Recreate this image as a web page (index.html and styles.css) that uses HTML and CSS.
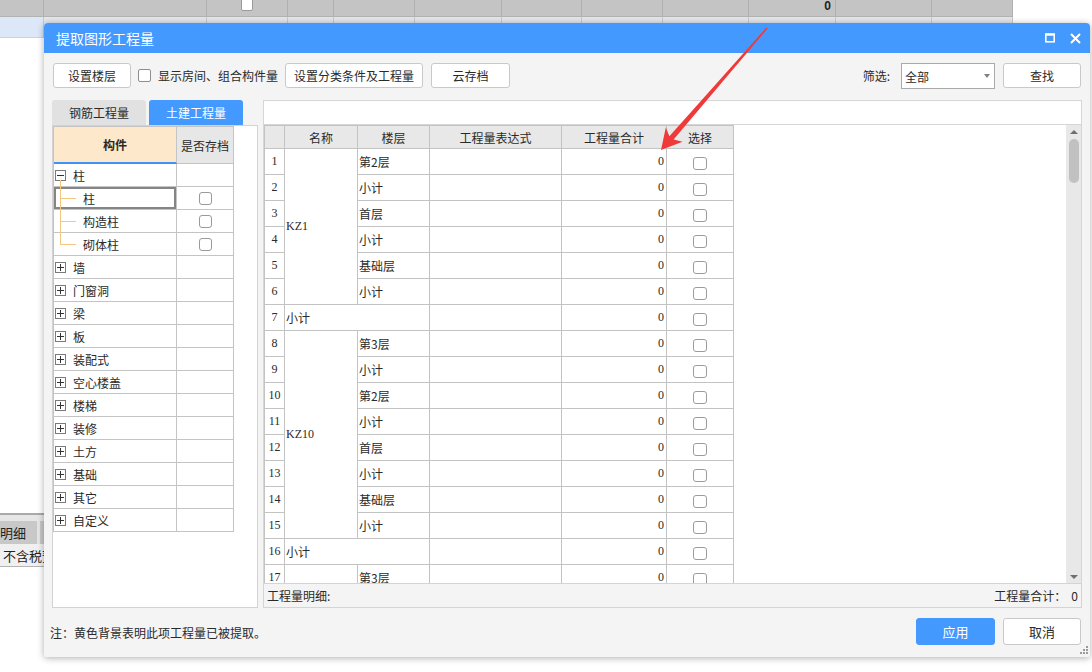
FILE: index.html
```html
<!DOCTYPE html>
<html lang="zh-CN">
<head>
<meta charset="utf-8">
<title>提取图形工程量</title>
<link rel="stylesheet" href="styles.css">
</head>
<body>
<div class="app">
  <div class="app-row row1">
    <div class="cell"></div>
    <div class="cell"></div>
    <div class="cell mid"><span class="app-check"></span></div>
    <div class="cell"></div>
    <div class="cell"></div>
    <div class="cell"></div>
    <div class="cell"></div>
    <div class="cell"></div>
    <div class="cell"></div>
    <div class="cell end"><b class="app-zero">0</b></div>
    <div class="cell"></div>
    <div class="cell"></div>
  </div>
  <div class="app-row row2">
    <div class="cell sel"></div>
    <div class="cell"></div>
    <div class="cell"></div>
    <div class="cell"></div>
    <div class="cell"></div>
    <div class="cell"></div>
    <div class="cell"></div>
    <div class="cell"></div>
    <div class="cell"></div>
    <div class="cell"></div>
    <div class="cell"></div>
    <div class="cell"></div>
  </div>
  <div class="app-spacer"></div>
  <div class="app-bottom">
    <div class="app-tabs">
      <div class="app-tab">明细</div>
      <div class="app-tab short"></div>
    </div>
    <div class="app-line">不含税预</div>
  </div>
</div>

<div class="dialog">
  <div class="titlebar">
    <span class="title">提取图形工程量</span>
    <span class="win-btns">
      <svg class="win-icon" width="10" height="10" viewBox="0 0 10 10"><rect x="0.8" y="1.2" width="8.4" height="7.6" fill="none" stroke="#fff" stroke-width="1.6"/><rect x="0" y="0.5" width="10" height="2.2" fill="#fff"/></svg>
      <svg class="win-icon" width="11" height="11" viewBox="0 0 11 11"><path d="M1 1 L10 10 M10 1 L1 10" stroke="#fff" stroke-width="2" fill="none"/></svg>
    </span>
  </div>

  <div class="toolbar">
    <button class="btn w78">设置楼层</button>
    <span class="chk-label"><span class="chk"></span>显示房间、组合构件量</span>
    <button class="btn w138">设置分类条件及工程量</button>
    <button class="btn w79">云存档</button>
    <span class="grow"></span>
    <span class="filter-label">筛选:</span>
    <div class="select">全部<span class="caret"></span></div>
    <button class="btn w78">查找</button>
  </div>

  <div class="content">
    <div class="left-col">
      <div class="tabs">
        <div class="tab">钢筋工程量</div>
        <div class="tab active">土建工程量</div>
      </div>
      <div class="left-panel">
        <div class="tree">
          <div class="tree-head"><div class="c1">构件</div><div class="c2">是否存档</div></div>
          <div class="tree-row"><div class="c1 parent"><span class="exp"></span>柱</div><div class="c2"></div></div>
          <div class="tree-row"><div class="c1 child selected">柱</div><div class="c2"><span class="chk"></span></div></div>
          <div class="tree-row"><div class="c1 child">构造柱</div><div class="c2"><span class="chk"></span></div></div>
          <div class="tree-row"><div class="c1 child last">砌体柱</div><div class="c2"><span class="chk"></span></div></div>
          <div class="tree-row"><div class="c1"><span class="exp plus"></span>墙</div><div class="c2"></div></div>
          <div class="tree-row"><div class="c1"><span class="exp plus"></span>门窗洞</div><div class="c2"></div></div>
          <div class="tree-row"><div class="c1"><span class="exp plus"></span>梁</div><div class="c2"></div></div>
          <div class="tree-row"><div class="c1"><span class="exp plus"></span>板</div><div class="c2"></div></div>
          <div class="tree-row"><div class="c1"><span class="exp plus"></span>装配式</div><div class="c2"></div></div>
          <div class="tree-row"><div class="c1"><span class="exp plus"></span>空心楼盖</div><div class="c2"></div></div>
          <div class="tree-row"><div class="c1"><span class="exp plus"></span>楼梯</div><div class="c2"></div></div>
          <div class="tree-row"><div class="c1"><span class="exp plus"></span>装修</div><div class="c2"></div></div>
          <div class="tree-row"><div class="c1"><span class="exp plus"></span>土方</div><div class="c2"></div></div>
          <div class="tree-row"><div class="c1"><span class="exp plus"></span>基础</div><div class="c2"></div></div>
          <div class="tree-row"><div class="c1"><span class="exp plus"></span>其它</div><div class="c2"></div></div>
          <div class="tree-row"><div class="c1"><span class="exp plus"></span>自定义</div><div class="c2"></div></div>
        </div>
      </div>
    </div>

    <div class="right-col">
      <div class="strip"></div>
      <div class="gridbox">
        <div class="grid-area">
          <div class="grid">
            <div class="gh"></div><div class="gh">名称</div><div class="gh">楼层</div><div class="gh">工程量表达式</div><div class="gh">工程量合计</div><div class="gh">选择</div>

            <div class="g n">1</div><div class="g nm span6">KZ1</div><div class="g fl">第2层</div><div class="g"></div><div class="g v">0</div><div class="g ck"><span class="gchk"></span></div>
            <div class="g n">2</div><div class="g fl">小计</div><div class="g"></div><div class="g v">0</div><div class="g ck"><span class="gchk"></span></div>
            <div class="g n">3</div><div class="g fl">首层</div><div class="g"></div><div class="g v">0</div><div class="g ck"><span class="gchk"></span></div>
            <div class="g n">4</div><div class="g fl">小计</div><div class="g"></div><div class="g v">0</div><div class="g ck"><span class="gchk"></span></div>
            <div class="g n">5</div><div class="g fl">基础层</div><div class="g"></div><div class="g v">0</div><div class="g ck"><span class="gchk"></span></div>
            <div class="g n">6</div><div class="g fl">小计</div><div class="g"></div><div class="g v">0</div><div class="g ck"><span class="gchk"></span></div>
            <div class="g n">7</div><div class="g fl wide">小计</div><div class="g"></div><div class="g v">0</div><div class="g ck"><span class="gchk"></span></div>

            <div class="g n">8</div><div class="g nm span8">KZ10</div><div class="g fl">第3层</div><div class="g"></div><div class="g v">0</div><div class="g ck"><span class="gchk"></span></div>
            <div class="g n">9</div><div class="g fl">小计</div><div class="g"></div><div class="g v">0</div><div class="g ck"><span class="gchk"></span></div>
            <div class="g n">10</div><div class="g fl">第2层</div><div class="g"></div><div class="g v">0</div><div class="g ck"><span class="gchk"></span></div>
            <div class="g n">11</div><div class="g fl">小计</div><div class="g"></div><div class="g v">0</div><div class="g ck"><span class="gchk"></span></div>
            <div class="g n">12</div><div class="g fl">首层</div><div class="g"></div><div class="g v">0</div><div class="g ck"><span class="gchk"></span></div>
            <div class="g n">13</div><div class="g fl">小计</div><div class="g"></div><div class="g v">0</div><div class="g ck"><span class="gchk"></span></div>
            <div class="g n">14</div><div class="g fl">基础层</div><div class="g"></div><div class="g v">0</div><div class="g ck"><span class="gchk"></span></div>
            <div class="g n">15</div><div class="g fl">小计</div><div class="g"></div><div class="g v">0</div><div class="g ck"><span class="gchk"></span></div>
            <div class="g n">16</div><div class="g fl wide">小计</div><div class="g"></div><div class="g v">0</div><div class="g ck"><span class="gchk"></span></div>
            <div class="g n">17</div><div class="g nm span6"></div><div class="g fl">第3层</div><div class="g"></div><div class="g v">0</div><div class="g ck"><span class="gchk"></span></div>
          </div>
        </div>
        <div class="scrollbar">
          <span class="sb-up"></span>
          <span class="sb-thumb"></span>
          <span class="sb-down"></span>
        </div>
      </div>
      <div class="footer">
        <span>工程量明细:</span>
        <span>工程量合计：<span class="total">0</span></span>
      </div>
    </div>
  </div>

  <div class="bottombar">
    <span class="note">注：黄色背景表明此项工程量已被提取。</span>
    <span class="grow"></span>
    <button class="btn primary w79">应用</button>
    <button class="btn w78">取消</button>
  </div>
  <svg class="grip" width="8" height="8" viewBox="0 0 8 8"><g fill="#9a9a9a"><rect x="6" y="0" width="2" height="2"/><rect x="3" y="3" width="2" height="2"/><rect x="6" y="3" width="2" height="2"/><rect x="0" y="6" width="2" height="2"/><rect x="3" y="6" width="2" height="2"/><rect x="6" y="6" width="2" height="2"/></g></svg>
</div>

<svg class="arrow" width="1092" height="672" viewBox="0 0 1092 672">
  <polygon points="661,150 682.5,141.8 673.6,139.4 767.6,28.4 766.4,27.6 669.4,136.2 665.8,127.6" fill="#f03a3a"/>
</svg>
</body>
</html>
```

FILE: styles.css
```css
* { box-sizing: border-box; }
html, body { margin: 0; padding: 0; }
body {
  width: 1092px;
  height: 672px;
  overflow: hidden;
  position: relative;
  background: #fff;
  font-family: "Noto Sans CJK SC", "Noto Sans", sans-serif;
  font-size: 12px;
  color: #2a2a2a;
}

/* ---------- background application ---------- */
.app { display: flex; flex-direction: column; height: 672px; }
.app-row {
  display: grid;
  grid-template-columns: 44px 163px 81px 46px 81px 87px 80px 81px 86px 87px 96px 81px;
  width: 1013px;
}
.row1 { height: 17px; background: #c4c4c4; border-bottom: 1px solid #b2b2b2; }
.row1 .cell { border-right: 1px solid #b0b0b0; display: flex; }
.row1 .cell.mid { justify-content: center; }
.row1 .cell.end { justify-content: flex-end; padding-right: 4px; }
.app-check {
  width: 12px; height: 13px; margin-top: -2px;
  background: #fff; border: 1px solid #9a9a9a; border-radius: 2px;
}
.app-zero { font-size: 12px; line-height: 13px; color: #222; font-family: "Liberation Sans", sans-serif; }
.row2 { height: 21px; background: #e3e6eb; border-bottom: 1px solid #d2d2d2; }
.row2 .cell { border-right: 1px solid #c9c9c9; }
.row2 .cell.sel { background: #dce7f8; }
.app-spacer { height: 475px; }
.app-bottom { width: 44px; }
.app-tabs {
  display: flex; height: 31px; padding-top: 6px;
  border-top: 2px solid #a9a9a9; background: #e6e6e6;
}
.app-tab {
  width: 37px; background: #c8c8c8; display: flex; align-items: center;
  font-size: 13px; color: #222; margin-right: 3px;
}
.app-tab.short { width: 4px; margin-right: 0; }
.app-line {
  height: 23px; background: #f0f0f0; border-bottom: 1px solid #b4b4b4;
  display: flex; align-items: center; padding-left: 3px; white-space: nowrap;
  overflow: hidden; font-size: 13px; color: #222;
}

/* ---------- dialog ---------- */
.dialog {
  position: absolute;
  left: 44px; top: 23px;
  width: 1046px; height: 634px;
  background: #f4f4f4;
  border-radius: 4px 4px 2px 2px;
  box-shadow: 0 1px 7px rgba(0, 0, 0, 0.32);
  display: flex; flex-direction: column;
}
.titlebar {
  height: 30px; flex: none;
  background: #4499ff;
  border-radius: 4px 4px 0 0;
  display: flex; align-items: center;
  padding: 0 9px 0 12px;
  color: #fff; font-size: 14px;
}
.win-btns { margin-left: auto; display: flex; align-items: center; gap: 15px; }
.win-icon { display: block; }

.toolbar {
  height: 25px; flex: none; margin-top: 10px;
  display: flex; align-items: flex-start;
  padding: 0 9px;
}
.btn {
  height: 25px;
  background: #fff;
  border: 1px solid #c9c9c9;
  border-radius: 3px;
  font-family: inherit; font-size: 12px; color: #2a2a2a;
  padding: 0; margin: 0;
}
.w78 { width: 78px; }
.w79 { width: 79px; }
.w138 { width: 138px; }
.chk {
  display: inline-block; width: 13px; height: 13px;
  border: 1px solid #8e8e8e; border-radius: 2px; background: #fff;
}
.chk-label { display: flex; align-items: center; height: 25px; margin: 0 7px; white-space: nowrap; }
.chk-label .chk { margin-right: 7px; }
.toolbar .w79 { margin-left: 8px; }
.grow { flex: 1; }
.filter-label { height: 25px; display: flex; align-items: center; margin-right: 11px; }
.select {
  width: 94px; height: 26px;
  background: #fff; border: 1px solid #a9a9a9;
  display: flex; align-items: center; padding-left: 3px;
  margin-right: 8px; position: relative;
}
.caret {
  margin-left: auto; margin-right: 4px;
  width: 0; height: 0;
  border-left: 3.5px solid transparent; border-right: 3.5px solid transparent;
  border-top: 4px solid #808080;
}

.content {
  height: 508px; flex: none; margin-top: 12px;
  display: flex; gap: 5px; padding: 0 8px;
}
.left-col { width: 206px; display: flex; flex-direction: column; }
.tabs { height: 25px; display: flex; gap: 3px; }
.tab {
  width: 94px; height: 25px;
  background: #e1e1e1; color: #2a2a2a;
  border-radius: 3px 3px 0 0;
  display: flex; align-items: center; justify-content: center;
}
.tab.active { background: #4499ff; color: #fff; }
.left-panel { flex: 1; background: #fff; border: 1px solid #d3d3d3; }

.tree { width: 181px; border-left: 1px solid #c4c4c4; border-top: 1px solid #c4c4c4; }
.tree-head { display: flex; height: 37px; }
.tree-head .c1 {
  width: 123px; background: #fde8cb; font-weight: bold;
  border-right: 1px solid #c4c4c4; border-bottom: 2px solid #3f93f4;
  display: flex; align-items: center; justify-content: center;
}
.tree-head .c2 {
  width: 57px; background: #e7e7e7;
  border-right: 1px solid #c4c4c4; border-bottom: 1px solid #c4c4c4;
  display: flex; align-items: center; justify-content: center;
}
.tree-row { display: flex; height: 23px; border-bottom: 1px solid #c4c4c4; }
.tree-row .c1 {
  width: 123px; border-right: 1px solid #c4c4c4;
  display: flex; align-items: center; padding-left: 1px;
  position: relative;
}
.tree-row .c2 {
  width: 57px; border-right: 1px solid #c4c4c4;
  display: flex; align-items: center; justify-content: center;
}
.exp {
  width: 11px; height: 11px; margin-right: 7px;
  border: 1px solid #7a7a7a; background: #fff; position: relative;
}
.exp::before {
  content: ""; position: absolute; left: 1px; top: 4px; width: 7px; height: 1px; background: #333;
}
.exp.plus::after {
  content: ""; position: absolute; left: 4px; top: 1px; width: 1px; height: 7px; background: #333;
}
.c1.parent::after {
  content: ""; position: absolute; left: 6px; top: 16px; bottom: -1px;
  border-left: 1px solid #f7c57d;
}
.c1.child { padding-left: 29px; }
.c1.child::before {
  content: ""; position: absolute; left: 6px; top: 0; bottom: -1px;
  border-left: 1px solid #f7c57d;
}
.c1.child.last::before { bottom: 11px; }
.c1.child::after {
  content: ""; position: absolute; left: 6px; top: 11px; width: 16px;
  border-top: 1px solid #f7c57d;
}
.c1.selected { box-shadow: inset 0 0 0 2px #858585; }
.tree-row .c2 .chk { border-color: #9a9a9a; border-radius: 3px; }

/* ---------- right column ---------- */
.right-col { flex: 1; display: flex; flex-direction: column; }
.strip { height: 25px; flex: none; background: #fff; border: 1px solid #d6d6d6; }
.gridbox {
  flex: 1; display: flex; min-height: 0;
  border-left: 1px solid #d6d6d6; border-right: 1px solid #d6d6d6;
  background: #fff;
}
.grid-area { flex: 1; overflow: hidden; }
.grid {
  display: grid;
  width: 470px;
  grid-template-columns: 19px 72px 71px 131px 104px 66px;
  grid-template-rows: 22px;
  grid-auto-rows: 25px;
  gap: 1px; padding: 1px;
  background: #c3c3c3;
}
.gh {
  background: #e8e8e8;
  display: flex; align-items: center; justify-content: center;
}
.g {
  background: #fff;
  display: flex; align-items: center;
  white-space: nowrap;
}
.g.n { justify-content: center; font-family: "Liberation Serif", "Noto Sans CJK SC", serif; }
.g.nm { padding-left: 1px; font-family: "Liberation Serif", "Noto Sans CJK SC", serif; }
.g.span6 { grid-row: span 6; }
.g.span8 { grid-row: span 8; }
.g.fl { padding-left: 1px; }
.g.fl.wide { grid-column: span 2; }
.g.v { justify-content: flex-end; padding-right: 2px; font-family: "Liberation Serif", serif; }
.g.ck { justify-content: center; }
.gchk {
  width: 14px; height: 13px; margin-top: 3px;
  border: 1px solid #9c9c9c; border-radius: 3px; background: #fff;
}

.scrollbar {
  width: 15px; flex: none; background: #e8e8e8;
  display: flex; flex-direction: column; align-items: center;
}
.sb-up {
  margin-top: 5px; width: 0; height: 0;
  border-left: 4px solid transparent; border-right: 4px solid transparent;
  border-bottom: 4px solid #6e6e6e;
}
.sb-thumb {
  margin-top: 5px; width: 10px; height: 44px;
  background: #c1c1c1; border-radius: 5px;
}
.sb-down {
  margin-top: auto; margin-bottom: 4px; width: 0; height: 0;
  border-left: 4px solid transparent; border-right: 4px solid transparent;
  border-top: 4px solid #6e6e6e;
}

.footer {
  height: 25px; flex: none;
  background: #f4f4f4; border: 1px solid #d4d4d4;
  display: flex; align-items: center; justify-content: space-between;
  padding: 0 3px 0 3px;
}
.total { margin-left: 5px; }

.bottombar {
  height: 49px; flex: none;
  display: flex; align-items: flex-start;
  padding: 10px 9px 0 6px;
}
.bottombar .btn { height: 27px; font-size: 13px; }
.bottombar .btn.primary { background: #4499ff; border-color: #4499ff; color: #fff; margin-right: 8px; }
.note { height: 27px; display: flex; align-items: center; padding-top: 2px; }
.grip { position: absolute; right: 2px; bottom: 3px; }

.arrow { position: absolute; left: 0; top: 0; pointer-events: none; }
```
